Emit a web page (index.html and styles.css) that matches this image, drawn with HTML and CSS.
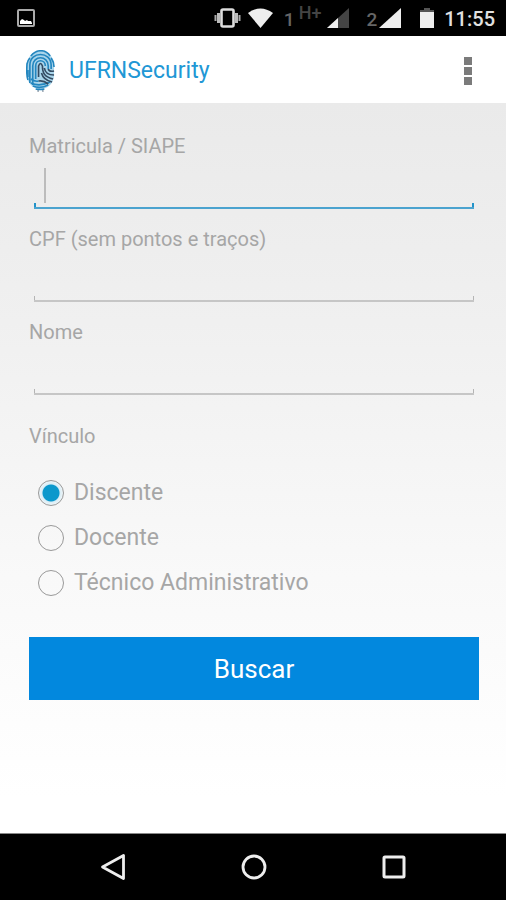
FILE: index.html
```html
<!DOCTYPE html>
<html lang="pt-BR">
<head>
<meta charset="utf-8">
<meta name="viewport" content="width=device-width, initial-scale=1">
<title>UFRNSecurity</title>
<link rel="stylesheet" href="styles.css">
</head>
<body>
<div class="status">
  <svg class="status-photo" width="18" height="18" viewBox="0 0 18 18"><rect x="1" y="1" width="16" height="16" rx="1" fill="none" stroke="#aaa" stroke-width="2"/><path d="M3 15v-3l2-2 2 1 1 1 2-1 1 1h3l1 2v1z" fill="#fff"/></svg>
  <svg class="status-vibrate" width="27" height="20" viewBox="0 0 27 20"><rect x="7.500" y="1.500" width="12" height="17" rx="1.500" fill="none" stroke="#ddd" stroke-width="2.600"/><path d="M4.500 5v10M22.500 5v10" stroke="#bbb" stroke-width="3"/><path d="M1.500 7v6M25.500 7v6" stroke="#aaa" stroke-width="2"/></svg>
  <svg class="status-wifi" width="25" height="20" viewBox="0 0 25 20"><path d="M0 5Q12.500-4 25 5L12.500 20z" fill="#eee"/></svg>
  <span class="sim sim-one">1</span>
  <span class="network">H+</span>
  <svg class="status-signal" width="22" height="20" viewBox="0 0 22 20"><path d="M22 0v20H0z" fill="#444"/><path d="M11 10v10H0z" fill="#eee"/></svg>
  <span class="sim sim-two">2</span>
  <svg width="22" height="20" viewBox="0 0 22 20"><path d="M22 0v20H0z" fill="#eee"/></svg>
  <svg class="status-battery" width="14" height="20" viewBox="0 0 14 20"><path d="M4 0h6v2h4v3H0V2h4z" fill="#555"/><path d="M0 4h14v16H0z" fill="#eee"/></svg>
  <time class="clock">11:55</time>
</div>
<header class="bar">
  <svg class="logo" width="29" height="42" viewBox="0 0 30 42" preserveAspectRatio="none" fill="none" stroke-width="1.700">
    <rect x="1" y="1" width="28" height="38" rx="14" fill="#a9d5eb" stroke="none"/>
    <g stroke="#2386bf">
      <path d="M5 6C11-1 20-1 25 6M2 30C0 24 1 17 1 14Q2 10 4 8M26 8Q29 12 29 17"/>
      <path d="M4 33V15C4 1 26 1 26 15v4"/>
      <path d="M7 35V16C7 5 23 5 23 16v3"/>
      <path d="M10 29V16C10 9 20 9 20 16"/>
      <path d="M5 29q4 3 8 2M5 33q9 4 20-1M7 36q8 3 16-1M10 39q5 1 9 0M2 20v7"/>
    </g>
    <path d="M13 27V16q2-5 4 0c0 8 3 11 11 13M16 23q2 7 11 9M19 18q1 7 10 7M23 19q1 3 6 2M13 31q5-1 10 3" stroke="#344b62"/>
    <path d="M12 41h1M17 41h1" stroke="#344b62"/>
  </svg>
  <h1 class="title">UFRNSecurity</h1>
  <button class="more" type="button" aria-label="Mais opções"><svg width="8" height="30" viewBox="0 0 8 30"><path d="M0 1h8v8H0zM0 11h8v8H0zM0 21h8v8H0z" fill="#7b7b7b"/></svg></button>
</header>
<main class="content">
  <form>
    <div class="field">
      <label class="label" for="matricula">Matricula / SIAPE</label>
      <div class="box box-active"><input class="input" id="matricula" type="text"><span class="caret"></span></div>
    </div>
    <div class="field">
      <label class="label" for="cpf">CPF (sem pontos e traços)</label>
      <div class="box"><input class="input" id="cpf" type="text" inputmode="numeric"></div>
    </div>
    <div class="field">
      <label class="label" for="nome">Nome</label>
      <div class="box"><input class="input" id="nome" type="text"></div>
    </div>
    <fieldset class="group">
      <legend class="label legend">Vínculo</legend>
      <label class="option"><input class="radio" type="radio" name="vinculo" checked>Discente</label>
      <label class="option"><input class="radio" type="radio" name="vinculo">Docente</label>
      <label class="option"><input class="radio" type="radio" name="vinculo">Técnico Administrativo</label>
    </fieldset>
    <button class="submit" type="submit">Buscar</button>
  </form>
</main>
<nav class="nav">
  <button class="nav-button" type="button" aria-label="Voltar"><svg width="26" height="28" viewBox="0 0 26 28"><path d="M23.500 2.500v23L2.500 14z" fill="none" stroke="#eee" stroke-width="2.800" stroke-linejoin="round"/></svg></button>
  <button class="nav-button" type="button" aria-label="Início"><svg width="26" height="26" viewBox="0 0 26 26"><circle cx="13" cy="13" r="11" fill="none" stroke="#eee" stroke-width="2.800"/></svg></button>
  <button class="nav-button" type="button" aria-label="Recentes"><svg width="26" height="26" viewBox="0 0 26 26"><rect x="3" y="3" width="20" height="20" rx="1" fill="none" stroke="#eee" stroke-width="3"/></svg></button>
</nav>
</body>
</html>
```
FILE: styles.css
```css
* { box-sizing: border-box; }
body {
  margin: 0;
  min-height: 100vh;
  display: flex;
  flex-direction: column;
  font-family: Roboto, "Liberation Sans", sans-serif;
  background: #fff;
}
svg { display: block; flex: none; }
button { margin: 0; padding: 0; border: 0; background: none; font: inherit; }

.status {
  display: flex;
  align-items: center;
  height: 36px;
  padding: 0 11px 0 17px;
  background: #000;
}
.status-photo { margin-right: auto; }
.status-wifi { margin-left: 7px; }
.sim { font-size: 19px; font-weight: 500; line-height: 20px; color: #666; padding-top: 4px; }
.sim-one { margin-left: 11px; }
.sim-two { margin-left: 17px; margin-right: 2px; }
.network { margin-left: 4px; font-size: 18px; font-weight: 500; line-height: 20px; padding-bottom: 10px; color: #444; }
.status-signal { margin-left: 6px; }
.status-battery { margin-left: 19px; }
.clock { margin-left: 10px; font-size: 20px; font-weight: 500; line-height: 24px; color: #e0e0e0; padding-top: 2px; }

.bar {
  display: flex;
  align-items: center;
  height: 67px;
  padding: 2px 30px 0 26px;
  background: #fff;
}
.title { margin: 0 auto 0 14px; font-size: 23px; font-weight: 400; line-height: 28px; color: #2197d5; }
.more { padding: 4px; }

.content {
  flex: 1;
  padding: 31px 27px 30px 29px;
  background: linear-gradient(#eaeaea, #f0f0f0 30%, #f9f9f9 65%, #fff 95%);
  color: #a6a6a6;
}
.field { margin-bottom: 18px; }
.label { display: block; font-size: 20px; line-height: 24px; }
.box {
  position: relative;
  height: 51px;
  margin: 0 5px;
  border-bottom: 2px solid #c6c6c6;
}
.box::before, .box::after {
  content: "";
  position: absolute;
  bottom: 0;
  width: 1px;
  height: 4px;
  background: #b4b4b4;
}
.box::before { left: 0; }
.box::after { right: 0; }
.box-active { border-color: #4ba3cf; }
.box-active::before, .box-active::after { width: 2px; background: #2193c9; }
.input {
  display: block;
  width: 100%;
  height: 49px;
  padding: 0 11px;
  border: 0;
  outline: 0;
  background: none;
  font: inherit;
  font-size: 23px;
  color: #555;
}
.caret { position: absolute; left: 10px; bottom: 4px; width: 2px; height: 35px; background: #bcbcbc; }

.group { margin: 29px 0 32px; padding: 0; border: 0; }
.legend { padding: 0; margin-bottom: 22px; }
.option {
  display: flex;
  align-items: center;
  gap: 10px;
  height: 45px;
  padding-left: 9px;
  font-size: 23px;
  line-height: 28px;
}
.radio {
  appearance: none;
  flex: none;
  width: 26px;
  height: 26px;
  margin: 0;
  border: 1px solid #999;
  border-radius: 50%;
}
.radio:checked { background: radial-gradient(circle, #0b98cc 8px, #d9edf6 9px, #eef5f8 12px); }
.submit {
  display: block;
  width: 100%;
  height: 63px;
  background: #0288de;
  color: #fff;
  font-size: 26px;
}

.nav {
  display: flex;
  justify-content: space-between;
  align-items: center;
  height: 67px;
  padding: 0 99px 0 100px;
  border-top: 1px solid #888;
  background: #000;
}
```
